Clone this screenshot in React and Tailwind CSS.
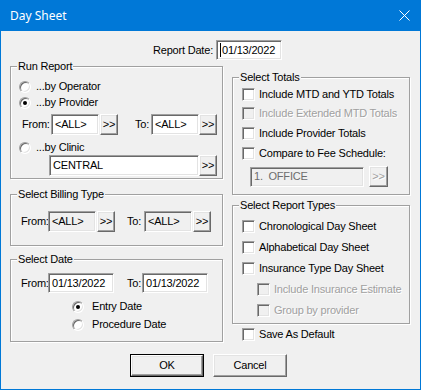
import React from "react";

const sunken =
  "border border-t-[#a0a0a0] border-l-[#a0a0a0] border-b-white border-r-white shadow-[inset_1px_1px_0_#696969,inset_-1px_-1px_0_#e3e3e3]";
const raised =
  "border border-t-white border-l-white border-b-[#696969] border-r-[#696969] shadow-[inset_-1px_-1px_0_#a0a0a0,inset_1px_1px_0_#e3e3e3]";
const disabledText = "text-[#a0a0a0] text-shadow-[1px_1px_0_#ffffff]";

function Group({ title, className, children }) {
  return (
    <div
      className={`relative border border-[#a0a0a0] shadow-[inset_1px_1px_0_#ffffff,1px_1px_0_#ffffff] ${className}`}
    >
      <span className="absolute left-[6px] -top-[7px] px-[1px] bg-[#f0f0f0] leading-[13px] whitespace-nowrap">
        {title}
      </span>
      {children}
    </div>
  );
}

function Radio({ checked }) {
  return (
    <div
      className={`w-[12px] h-[12px] rounded-full bg-white shrink-0 flex items-center justify-center ${sunken}`}
    >
      {checked && <div className="w-[4px] h-[4px] rounded-full bg-black" />}
    </div>
  );
}

function Check({ disabled }) {
  return (
    <div
      className={`w-[13px] h-[13px] shrink-0 ${sunken} ${disabled ? "bg-[#f0f0f0]" : "bg-white"}`}
    />
  );
}

function Btn({ className, disabled }) {
  return (
    <div
      className={`flex items-center justify-center bg-[#f0f0f0] shrink-0 ${raised} ${className} ${disabled ? disabledText : ""}`}
    >
      {">>"}
    </div>
  );
}

function Box({ className, children, disabled }) {
  return (
    <div
      className={`flex items-center pl-[3px] shrink-0 whitespace-nowrap overflow-hidden ${sunken} ${disabled ? "bg-[#f0f0f0]" : "bg-white"} ${className}`}
    >
      {children}
    </div>
  );
}

function CheckRow({ label, disabled, className }) {
  return (
    <div className={`flex items-center gap-[4px] h-[13px] ${className}`}>
      <Check disabled={disabled} />
      <span className={`whitespace-nowrap ${disabled ? disabledText : ""}`}>{label}</span>
    </div>
  );
}

export default function App() {
  return (
    <div className="w-[421px] h-[390px] bg-[#0078d7] flex flex-col px-px pb-px font-['Liberation_Sans',Arial,sans-serif] text-[11px] leading-[13px] tracking-[-0.2px] text-black">
      <div className="h-[31px] flex items-center justify-between pl-[9px] pr-[10px] shrink-0">
        <span className="text-white text-[12px] leading-[16px] tracking-normal font-['Noto_Sans',sans-serif]">
          Day Sheet
        </span>
        <svg width="11" height="11" viewBox="0 0 11 11">
          <path d="M0.5 0.5L10.5 10.5M10.5 0.5L0.5 10.5" stroke="white" strokeWidth="1" />
        </svg>
      </div>

      <div className="flex-1 bg-[#f0f0f0] flex flex-col pt-[9px]">
        {/* Report date */}
        <div className="flex items-center justify-end w-[281px] h-[20px] gap-[3px]">
          <span>Report Date:</span>
          <Box className="w-[66px] h-[20px] pl-[2px]">
            <span className="w-px h-[14px] bg-black mr-[1px] shrink-0" />
            01/13/2022
          </Box>
        </div>

        <div className="flex items-start pl-[9px] gap-[9px]">
          {/* Left column */}
          <div className="flex flex-col mt-[6px] w-[213px]">
            <Group title="Run Report" className="h-[113px]">
              <div className="flex flex-col pt-[13px] pl-[8px]">
                <div className="flex items-center gap-[5px] h-[13px]">
                  <Radio />
                  <span>...by Operator</span>
                </div>
                <div className="flex items-center gap-[5px] h-[13px] mt-[3px]">
                  <Radio checked />
                  <span>...by Provider</span>
                </div>
                <div className="flex items-center h-[21px] mt-[5px] ml-[3px]">
                  <span className="w-[29px]">From:</span>
                  <Box className="w-[48px] h-[21px]">{"<ALL>"}</Box>
                  <Btn className="w-[18px] h-[21px] ml-[1px]" />
                  <span className="w-[16px] ml-[17px]">To:</span>
                  <Box className="w-[48px] h-[21px]">{"<ALL>"}</Box>
                  <Btn className="w-[18px] h-[21px]" />
                </div>
                <div className="flex items-center gap-[5px] h-[13px] mt-[6px]">
                  <Radio />
                  <span>...by Clinic</span>
                </div>
                <div className="flex items-center h-[21px] mt-[1px] ml-[30px]">
                  <Box className="w-[150px] h-[21px]">CENTRAL</Box>
                  <Btn className="w-[18px] h-[21px]" />
                </div>
              </div>
            </Group>

            <Group title="Select Billing Type" className="h-[52px] mt-[15px]">
              <div className="flex items-center h-[21px] mt-[16px] ml-[10px]">
                <span className="w-[27px]">From:</span>
                <Box disabled className="w-[48px] h-[21px]">{"<ALL>"}</Box>
                <Btn className="w-[18px] h-[21px] ml-[1px]" />
                <span className="w-[17px] ml-[12px]">To:</span>
                <Box disabled className="w-[48px] h-[21px]">{"<ALL>"}</Box>
                <Btn className="w-[18px] h-[21px] ml-[1px]" />
              </div>
            </Group>

            <Group title="Select Date" className="h-[83px] mt-[13px]">
              <div className="flex flex-col pt-[13px] pl-[10px]">
                <div className="flex items-center h-[20px]">
                  <span className="w-[27px]">From:</span>
                  <Box className="w-[66px] h-[20px] pl-[2px]">01/13/2022</Box>
                  <span className="w-[15px] ml-[13px]">To:</span>
                  <Box className="w-[66px] h-[20px] pl-[2px]">01/13/2022</Box>
                </div>
                <div className="flex items-center gap-[8px] h-[13px] mt-[7px] ml-[51px]">
                  <Radio checked />
                  <span>Entry Date</span>
                </div>
                <div className="flex items-center gap-[8px] h-[13px] mt-[5px] ml-[51px]">
                  <Radio />
                  <span>Procedure Date</span>
                </div>
              </div>
            </Group>
          </div>

          {/* Right column */}
          <div className="flex flex-col mt-[17px] w-[178px]">
            <Group title="Select Totals" className="h-[118px]">
              <div className="flex flex-col pt-[10px] pl-[9px]">
                <CheckRow label="Include MTD and YTD Totals" />
                <CheckRow label="Include Extended MTD Totals" disabled className="mt-[6px]" />
                <CheckRow label="Include Provider Totals" className="mt-[7px]" />
                <CheckRow label="Compare to Fee Schedule:" className="mt-[7px]" />
                <div className="flex items-center h-[21px] mt-[6px] ml-[8px]">
                  <Box disabled className="w-[114px] h-[20px] text-[#6d6d6d]">
                    1.&nbsp;&nbsp;OFFICE
                  </Box>
                  <Btn disabled className="w-[19px] h-[21px] ml-[5px]" />
                </div>
              </div>
            </Group>

            <Group title="Select Report Types" className="h-[119px] mt-[10px]">
              <div className="flex flex-col pt-[14px] pl-[9px]">
                <CheckRow label="Chronological Day Sheet" />
                <CheckRow label="Alphabetical Day Sheet" className="mt-[8px]" />
                <CheckRow label="Insurance Type Day Sheet" className="mt-[8px]" />
                <CheckRow label="Include Insurance Estimate" disabled className="mt-[8px] ml-[15px]" />
                <CheckRow label="Group by provider" disabled className="mt-[8px] ml-[15px]" />
              </div>
            </Group>

            <CheckRow label="Save As Default" className="mt-[4px] ml-[10px]" />
          </div>
        </div>

        {/* Buttons */}
        <div className="flex items-center gap-[9px] pl-[129px] mt-[12px]">
          <div className="w-[74px] h-[23px] border border-black flex shrink-0">
            <div className={`flex-1 flex items-center justify-center bg-[#f0f0f0] ${raised}`}>OK</div>
          </div>
          <div className={`w-[74px] h-[23px] flex items-center justify-center bg-[#f0f0f0] shrink-0 ${raised}`}>
            Cancel
          </div>
        </div>
      </div>
    </div>
  );
}
